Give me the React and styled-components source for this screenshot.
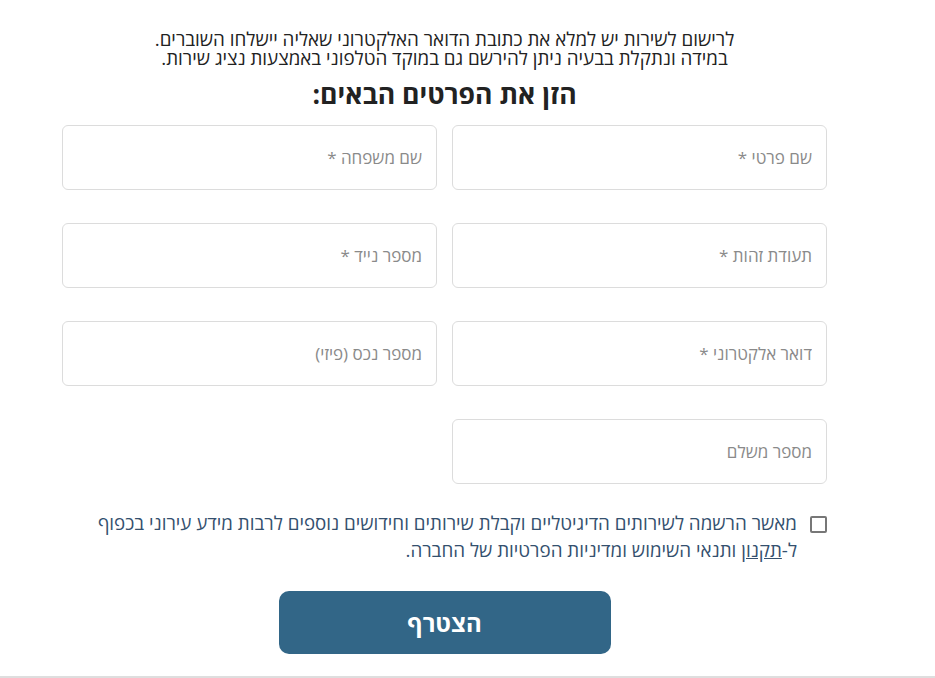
import React, { useState } from 'react'
import styled, { createGlobalStyle } from 'styled-components'

const GlobalStyle = createGlobalStyle`
  body {
    margin: 0;
    background: #fff;
    font-family: "Open Sans", "Liberation Sans", "DejaVu Sans", sans-serif;
  }
`

const fields = [
  { id: 'firstName', label: 'שם פרטי *' },
  { id: 'lastName', label: 'שם משפחה *' },
  { id: 'idNumber', label: 'תעודת זהות *' },
  { id: 'mobile', label: 'מספר נייד *' },
  { id: 'email', label: 'דואר אלקטרוני *' },
  { id: 'property', label: 'מספר נכס (פיזי)' },
  { id: 'payer', label: 'מספר משלם' }
]

const App = () => {
  const [values, setValues] = useState({})
  const [agree, setAgree] = useState(false)

  const handleChange = (id) => (e) => {
    setValues({ ...values, [id]: e.target.value })
  }

  return (
    <Page dir="rtl">
      <GlobalStyle />
      <Wrapper>
        <Intro>
          לרישום לשירות יש למלא את כתובת הדואר האלקטרוני שאליה יישלחו השוברים.
          <br />
          במידה ונתקלת בבעיה ניתן להירשם גם במוקד הטלפוני באמצעות נציג שירות.
        </Intro>
        <Title>הזן את הפרטים הבאים:</Title>

        <FieldsGrid>
          {fields.map((f) => (
            <Field
              key={f.id}
              placeholder={f.label}
              value={values[f.id] || ''}
              onChange={handleChange(f.id)}
            />
          ))}
        </FieldsGrid>

        <ConsentRow>
          <CheckBox
            type="checkbox"
            checked={agree}
            onChange={() => setAgree(!agree)}
          />
          <ConsentText>
            מאשר הרשמה לשירותים הדיגיטליים וקבלת שירותים וחידושים נוספים לרבות
            מידע עירוני בכפוף ל-<TermsLink href="#">תקנון</TermsLink> ותנאי
            השימוש ומדיניות הפרטיות של החברה.
          </ConsentText>
        </ConsentRow>

        <SubmitButton type="button">הצטרף</SubmitButton>
      </Wrapper>
      <BottomRule />
    </Page>
  )
}

const Page = styled.div`
  width: 935px;
  min-height: 678px;
  display: flex;
  flex-direction: column;
`

const Wrapper = styled.div`
  width: 765px;
  margin-right: 108px;
  padding-top: 30px;
  display: flex;
  flex-direction: column;
  align-items: center;
`

const Intro = styled.p`
  margin: 0;
  text-align: center;
  font-size: 18.8px;
  line-height: 18.5px;
  color: #222;
`

const Title = styled.h2`
  margin: 12px 0 16px;
  font-size: 26.6px;
  line-height: 30px;
  font-weight: 700;
  color: #222;
`

const FieldsGrid = styled.div`
  width: 100%;
  display: grid;
  grid-template-columns: 375px 375px;
  column-gap: 15px;
  row-gap: 33px;
`

const Field = styled.input`
  box-sizing: border-box;
  height: 65px;
  width: 100%;
  border: 1px solid #dcdcdc;
  border-radius: 6px;
  padding: 0 14px;
  font-family: "Open Sans", "Liberation Sans", sans-serif;
  font-size: 17px;
  color: #333;
  background: #fff;
  outline: none;

  &::placeholder {
    color: #8a8a8a;
  }
`

const ConsentRow = styled.label`
  width: 100%;
  margin-top: 31px;
  display: flex;
  align-items: flex-start;
  gap: 13px;
`

const CheckBox = styled.input`
  appearance: none;
  flex: 0 0 auto;
  box-sizing: border-box;
  width: 17px;
  height: 17px;
  margin: 1px 0 0;
  border: 2px solid #777;
  border-radius: 2px;
  background: #fff;
  cursor: pointer;

  &:checked {
    background: #326687;
    border-color: #326687;
  }
`

const ConsentText = styled.span`
  font-size: 18.8px;
  line-height: 27px;
  margin-top: -5px;
  color: #34506e;
`

const TermsLink = styled.a`
  color: inherit;
  text-decoration: underline;
`

const SubmitButton = styled.button`
  margin-top: 27px;
  width: 332px;
  height: 63px;
  border: none;
  border-radius: 10px;
  background: #326687;
  color: #fff;
  font-family: "Open Sans", "Liberation Sans", sans-serif;
  font-size: 24px;
  font-weight: 700;
  cursor: pointer;
`

const BottomRule = styled.div`
  margin-top: 22px;
  height: 2px;
  background: #dedede;
`

export default App
